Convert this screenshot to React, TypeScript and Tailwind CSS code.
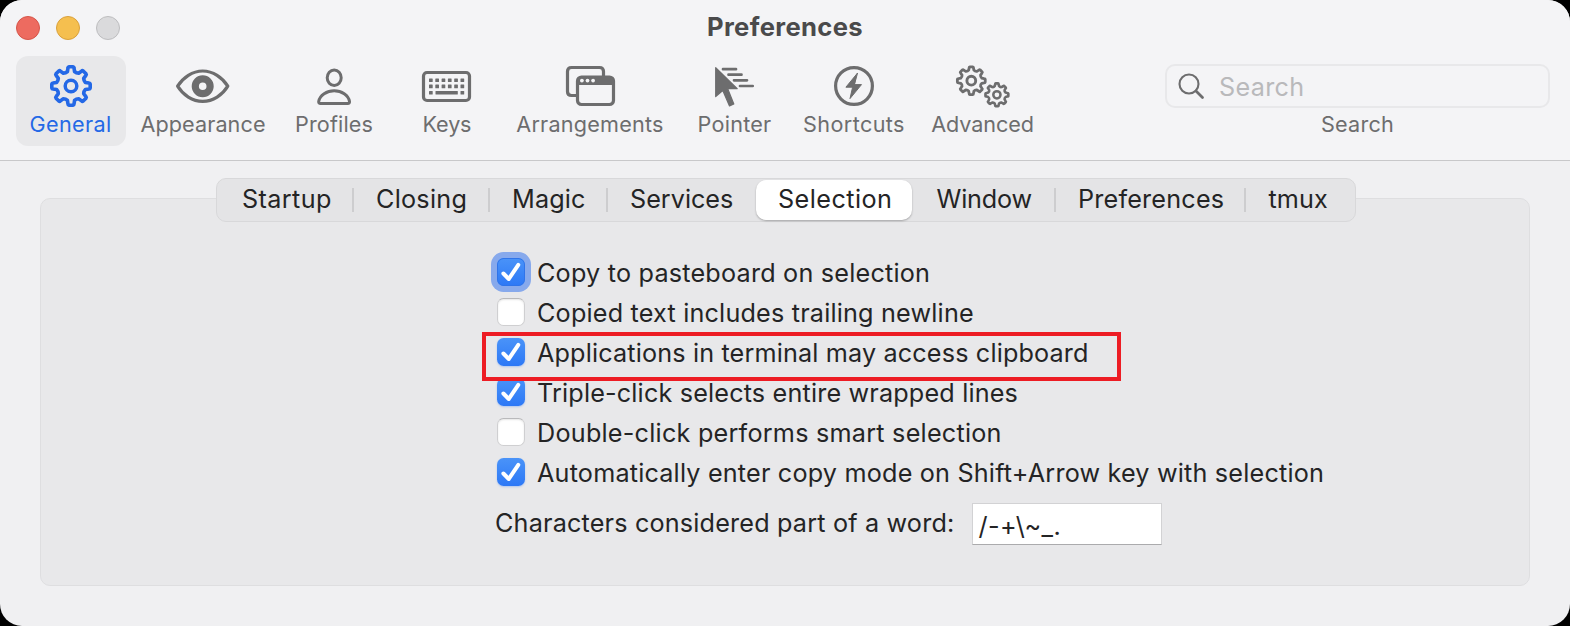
import type { ReactNode } from 'react';

function gearPath(cx: number, cy: number, outer: number, valley: number) {
  const at = (r: number, deg: number) => {
    const a = ((deg - 90) * Math.PI) / 180;
    return `${(cx + r * Math.cos(a)).toFixed(2)} ${(cy + r * Math.sin(a)).toFixed(2)}`;
  };
  let d = '';
  for (let k = 0; k < 8; k++) {
    const t = k * 45;
    d += `${k ? 'L' : 'M'}${at(valley, t - 14)}`;
    d += `L${at(outer - 1, t - 9.5)}Q${at(outer, t - 9)} ${at(outer, t - 6)}`;
    d += `L${at(outer, t + 6)}Q${at(outer, t + 9)} ${at(outer - 1, t + 9.5)}`;
    d += `L${at(valley, t + 14)}Q${at(valley - 1, t + 22.5)} ${at(valley, t + 31)}`;
  }
  return d + 'Z';
}

function Icon({ width, viewBox, children }: { width: number; viewBox: string; children: ReactNode }) {
  return (
    <svg width={width} height={55} viewBox={viewBox} fill="none" stroke="currentColor" strokeWidth={3.2} strokeLinejoin="round" strokeLinecap="round" className="block shrink-0">
      {children}
    </svg>
  );
}

const keyColumns = [0, 1, 2, 3, 4, 5];

const tools = [
  {
    name: 'General',
    box: 'w-[110px] rounded-[12px] bg-[#e8e8ea] text-[#2468e6]',
    label: 'tracking-[0.37px] -ml-px',
    icon: (
      <Icon width={110} viewBox="16 56 110 55">
        <path d={gearPath(71, 86, 19.3, 14.8)} strokeWidth={3.6} />
        <circle cx="71" cy="86" r="5.8" strokeWidth={3.5} />
      </Icon>
    ),
  },
  {
    name: 'Appearance',
    box: 'w-[154px]',
    label: 'tracking-[0.1px]',
    icon: (
      <Icon width={154} viewBox="126 56 154 55">
        <path d="M177.6 86.2C183 77.5 192.5 71 202.7 71S222.5 77.5 227.8 86.2C222.5 95 213 101.4 202.7 101.4S183 95 177.6 86.2Z" />
        <circle cx="202.7" cy="86.2" r="7.4" strokeWidth={7.2} />
      </Icon>
    ),
  },
  {
    name: 'Profiles',
    box: 'w-[110px]',
    label: 'tracking-[0.14px] -ml-0.5',
    icon: (
      <Icon width={110} viewBox="280 56 110 55">
        <ellipse cx="334.2" cy="77.8" rx="7" ry="7.8" strokeWidth={3} />
        <path d="M320.5 103.5H347.8Q349.7 103.5 349.5 101.5C348.5 95 341.5 90.8 334.2 90.8S319.8 95 318.7 101.5Q318.6 103.500 320.5 103.5Z" strokeWidth={3} />
      </Icon>
    ),
  },
  {
    name: 'Keys',
    box: 'w-[114px]',
    label: 'tracking-[-0.15px]',
    icon: (
      <Icon width={114} viewBox="390 56 114 55">
        <rect x="423.5" y="72.5" width="46" height="28" rx="3.5" />
        <g fill="currentColor" stroke="none">
          {keyColumns.map((i) => (
            <rect key={i} x={429 + i * 6.3} y="78.4" width="3.7" height="3.7" rx="0.5" />
          ))}
          {keyColumns.map((i) => (
            <rect key={i} x={429 + i * 6.3} y="84.6" width="3.7" height="3.7" rx="0.5" />
          ))}
          <rect x="429" y="90.9" width="3.7" height="3.7" rx="0.5" />
          <rect x="435.5" y="90.9" width="22.3" height="3.7" rx="0.5" />
          <rect x="460.5" y="90.9" width="3.7" height="3.7" rx="0.5" />
        </g>
      </Icon>
    ),
  },
  {
    name: 'Arrangements',
    box: 'w-[172px]',
    label: 'tracking-[0.22px]',
    icon: (
      <Icon width={172} viewBox="504 56 172 55">
        <path d="M576 95.5H571.5Q567.5 95.5 567.5 91.5V71.5Q567.5 67.5 571.5 67.5H599.5Q603.5 67.5 603.5 71.5V76" />
        <rect x="577.5" y="77" width="36" height="27.5" rx="4" />
        <path d="M577.5 85V80.5Q577.5 77 581.5 77H609.5Q613.5 77 613.5 80.5V85Z" fill="currentColor" stroke="none" />
        <g fill="#f4f4f6" stroke="none">
          <circle cx="581.9" cy="80.6" r="1.9" />
          <circle cx="587.5" cy="80.6" r="1.9" />
          <circle cx="593.1" cy="80.6" r="1.9" />
        </g>
      </Icon>
    ),
  },
  {
    name: 'Pointer',
    box: 'w-[117px]',
    label: 'tracking-[0.24px]',
    icon: (
      <Icon width={117} viewBox="676 56 117 55">
        <path d="M715.7 67.7L737.2 88.7H727.7L733.8 104L729.5 106L722.8 90.5L715.7 96.5Z" fill="currentColor" strokeWidth={1.2} />
        <path d="M723 69.2H736M728.5 74.7H741.5M734 80.3H747M740 86H752.7" strokeWidth={2.7} />
      </Icon>
    ),
  },
  {
    name: 'Shortcuts',
    box: 'w-[122px]',
    label: 'tracking-[0.39px]',
    icon: (
      <Icon width={122} viewBox="793 56 122 55">
        <circle cx="854" cy="86" r="18.4" />
        <path d="M857.3 73.3L845.9 87.2H852.6L850 98.6L861.5 84.6H854.8Z" fill="currentColor" strokeWidth={1} />
      </Icon>
    ),
  },
  {
    name: 'Advanced',
    box: 'w-[136px]',
    label: 'tracking-[-0.08px] -ml-px',
    icon: (
      <Icon width={136} viewBox="915 56 136 55">
        <path d={gearPath(971.3, 80.7, 14, 10.8)} strokeWidth={2.8} />
        <circle cx="971.3" cy="80.7" r="4.4" strokeWidth={2.9} />
        <path d={gearPath(996.9, 94.8, 11.5, 9)} strokeWidth={2.6} />
        <circle cx="996.9" cy="94.8" r="3.6" strokeWidth={2.5} />
      </Icon>
    ),
  },
];

const tabs = [
  { name: 'Startup', cls: 'w-[135px] pl-[25px] tracking-[0.39px]', divider: true },
  { name: 'Closing', cls: 'w-[134px] pl-[22px] tracking-[0.25px]', divider: true },
  { name: 'Magic', cls: 'w-[116px] pl-[22px] tracking-[0.14px]', divider: true },
  { name: 'Services', cls: 'w-[148px] pl-[22px]', divider: false },
  { name: 'Selection', cls: 'w-[156px] pl-[22px] tracking-[0.44px] rounded-[10px] bg-white shadow-[0_1px_2px_rgba(0,0,0,0.28)]', divider: false },
  { name: 'Window', cls: 'w-[142px] pl-[24.5px] tracking-[-0.17px]', divider: true },
  { name: 'Preferences', cls: 'w-[188px] pl-[22px] tracking-[0.2px]', divider: true },
  { name: 'tmux', cls: 'w-[109px] pl-[22.5px] tracking-[0.1px]', divider: false },
];

const options = [
  { text: 'Copy to pasteboard on selection', checked: true, focused: true, cls: 'tracking-[0.21px]' },
  { text: 'Copied text includes trailing newline', checked: false, cls: 'tracking-[0.19px]' },
  { text: 'Applications in terminal may access clipboard', checked: true, marked: true, cls: 'tracking-[0.155px]' },
  { text: 'Triple-click selects entire wrapped lines', checked: true, cls: 'tracking-[0.17px]' },
  { text: 'Double-click performs smart selection', checked: false, cls: 'tracking-[0.235px]' },
  { text: 'Automatically enter copy mode on Shift+Arrow key with selection', checked: true, cls: 'tracking-[0.19px]' },
];

function Checkbox({ checked, focused }: { checked: boolean; focused?: boolean }) {
  if (!checked) {
    return <span className="size-7 shrink-0 rounded-[6.5px] border border-[#cfcfd1] border-t-[#b9b9bb] bg-white shadow-[inset_0_1px_2px_rgba(0,0,0,0.1)]" />;
  }
  return (
    <span
      className={`size-7 shrink-0 rounded-[6.5px] bg-linear-to-b from-[#4a93f8] to-[#2d78f6] ${
        focused ? 'shadow-[inset_0_0_0_1px_#2f74ea,0_0_0_6px_#87a9ec]' : 'shadow-[0_1px_2px_rgba(45,120,246,0.3)]'
      }`}
    >
      <svg width="28" height="28" viewBox="0 0 28 28" fill="none" stroke="white" strokeWidth="4" strokeLinecap="round" strokeLinejoin="round">
        <path d="M6.4 15.5L11.8 21L21.3 6.9" />
      </svg>
    </span>
  );
}

export default function App() {
  return (
    <div className="h-[626px] w-[1570px] overflow-hidden bg-black font-['Inter',sans-serif]">
      <div className="flex h-full flex-col overflow-hidden rounded-[22px] bg-[#f0f0f2]">
        <header className="h-[161px] shrink-0 border-b border-[#c8c8ca] bg-[#f4f4f6]">
          <div className="grid h-14 grid-cols-[1fr_auto_1fr] items-center">
            <div className="flex gap-4 pl-4">
              <span className="size-6 rounded-full border border-[#d55549] bg-[#ed6b60]" />
              <span className="size-6 rounded-full border border-[#d9a03c] bg-[#f5bf4f]" />
              <span className="size-6 rounded-full border border-[#bdbdbf] bg-[#dadadc]" />
            </div>
            <h1 className="pb-0.5 text-[25.6px] leading-8 font-bold tracking-[0.35px] text-[#4a4a4b]">Preferences</h1>
          </div>
          <div className="flex items-start pl-4 text-[21.6px] leading-[26px] text-[#6d6d6e]">
            {tools.map((t) => (
              <button key={t.name} className={`flex h-[90px] shrink-0 flex-col items-center ${t.box}`}>
                {t.icon}
                <span className={t.label}>{t.name}</span>
              </button>
            ))}
            <div className="mr-5 ml-auto flex w-[385px] flex-col items-center pt-2">
              <div className="flex h-11 w-full items-center rounded-[10px] border-2 border-[#e8e8ea] pl-[11px]">
                <svg width="28" height="28" viewBox="0 0 28 28" fill="none" stroke="#6d6d6e" strokeLinecap="round">
                  <circle cx="11" cy="12" r="9.5" strokeWidth="2.1" />
                  <path d="M18 19L24.5 25.5" strokeWidth="2.8" />
                </svg>
                <span className="pt-0.5 pl-[13px] text-[25.2px] leading-[30px] tracking-[0.3px] text-[#b9b9bb]">Search</span>
              </div>
              <span className="mt-[3px] tracking-[0.22px]">Search</span>
            </div>
          </div>
        </header>

        <main className="flex flex-col px-10 pt-[17px] text-[25.2px] text-[#242425]">
          <nav className="z-10 ml-44 flex h-11 w-[1140px] items-center rounded-[10px] border border-[#d8d8da] bg-[#e4e4e6]">
            {tabs.map((t) => (
              <div key={t.name} className="flex items-center">
                <button className={`h-10 pb-0.5 text-left leading-[38px] ${t.cls}`}>{t.name}</button>
                {t.divider && <span className="h-6 w-0.5 bg-[#cdcdcf]" />}
              </div>
            ))}
          </nav>
          <section className="-mt-6 h-[388px] rounded-[10px] border border-[#dedee0] bg-[#e8e8ea] pt-[53px] pl-[456px]">
            {options.map((o) => (
              <label key={o.text} className="relative flex h-10 items-center">
                <Checkbox checked={o.checked} focused={o.focused} />
                <span className={`pt-0.5 pl-3 leading-[38px] whitespace-nowrap ${o.cls}`}>{o.text}</span>
                {o.marked && <span className="absolute top-0 -left-[15px] z-10 h-[49px] w-[639px] border-4 border-[#ed1c24]" />}
              </label>
            ))}
            <div className="mt-[11px] -ml-[2px] flex items-start">
              <span className="leading-10 tracking-[0.177px]">Characters considered part of a word:</span>
              <input
                defaultValue="/-+\~_."
                className="ml-[18px] h-[42px] w-[190px] border border-[#d2d2d4] border-b-[#ababad] bg-white pt-1 pl-[5px] tracking-[0.43px] outline-none"
              />
            </div>
          </section>
        </main>
      </div>
    </div>
  );
}
